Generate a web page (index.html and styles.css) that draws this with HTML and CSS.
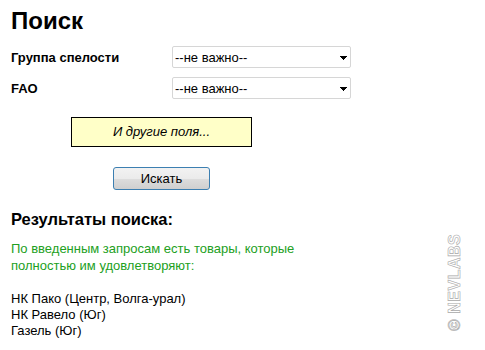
FILE: index.html
```html
<!DOCTYPE html>
<html lang="ru">
<head>
  <meta charset="UTF-8">
  <title>Поиск</title>
  <link rel="stylesheet" href="styles.css">
</head>
<body>
  <h1>Поиск</h1>

  <!-- Форма поиска -->
  <form class="search-form">
    <div class="row">
      <label for="ripeness">Группа спелости</label>
      <select id="ripeness">
        <option>--не важно--</option>
      </select>
    </div>
    <div class="row">
      <label for="fao">FAO</label>
      <select id="fao">
        <option>--не важно--</option>
      </select>
    </div>
    <div class="more">И другие поля...</div>
    <button type="button" class="btn">Искать</button>
  </form>

  <!-- Результаты -->
  <h2>Результаты поиска:</h2>
  <p class="found">По введенным запросам есть товары, которые полностью им удовлетворяют:</p>
  <ul class="results">
    <li>НК Пако (Центр, Волга-урал)</li>
    <li>НК Равело (Юг)</li>
    <li>Газель (Юг)</li>
  </ul>

  <div class="watermark">© NEVLABS</div>
</body>
</html>
```

FILE: styles.css
```css
* {
  box-sizing: border-box;
  margin: 0;
  padding: 0;
}

body {
  font-family: "Liberation Sans", Arial, sans-serif;
  font-size: 13px;
  color: #000;
  background: #fff;
  padding: 9px 11px;
  position: relative;
  min-height: 350px;
}

h1 {
  font-size: 24px;
  line-height: 24px;
}

.search-form {
  display: flex;
  flex-direction: column;
  align-items: flex-start;
  margin-top: 13px;
}

.row {
  display: flex;
  align-items: center;
  margin-bottom: 9px;
}

.row label {
  width: 161px;
  font-size: 13px;
  font-weight: bold;
}

.row select {
  width: 179px;
  height: 22px;
  font-family: "Liberation Sans", Arial, sans-serif;
  font-size: 13px;
  padding: 0 2px;
  border: 1px solid #d6d6d6;
  border-radius: 2px;
  background: #fff;
  color: #000;
  appearance: none;
  background-image: linear-gradient(45deg, transparent 50%, #000 50%), linear-gradient(135deg, #000 50%, transparent 50%);
  background-position: 167px 9px, 171px 9px;
  background-size: 4px 4px, 4px 4px;
  background-repeat: no-repeat;
}

.more {
  margin: 9px 0 0 60px;
  width: 181px;
  height: 30px;
  line-height: 28px;
  border: 1px solid #000;
  background: #ffffc8;
  font-style: italic;
  text-align: center;
}

.btn {
  margin: 20px 0 0 102px;
  width: 97px;
  height: 23px;
  font-family: "Liberation Sans", Arial, sans-serif;
  font-size: 13px;
  border: 1px solid #3c7fb1;
  border-radius: 3px;
  background: linear-gradient(#f2f2f2, #ebebeb 50%, #dddddd 51%, #cfcfcf);
  color: #000;
  cursor: pointer;
}

h2 {
  font-size: 16.5px;
  line-height: 18px;
  margin-top: 20px;
}

.found {
  color: #22a022;
  line-height: 17px;
  margin-top: 12px;
  width: 300px;
}

.results {
  list-style: none;
  line-height: 16px;
  margin-top: 17px;
}

/* Водяной знак */
.watermark {
  position: absolute;
  left: 400px;
  top: 267px;
  width: 110px;
  font-size: 16px;
  font-weight: bold;
  color: transparent;
  -webkit-text-stroke: 0.6px #a8a8a8;
  transform: rotate(-90deg);
  letter-spacing: 0.5px;
}
```
